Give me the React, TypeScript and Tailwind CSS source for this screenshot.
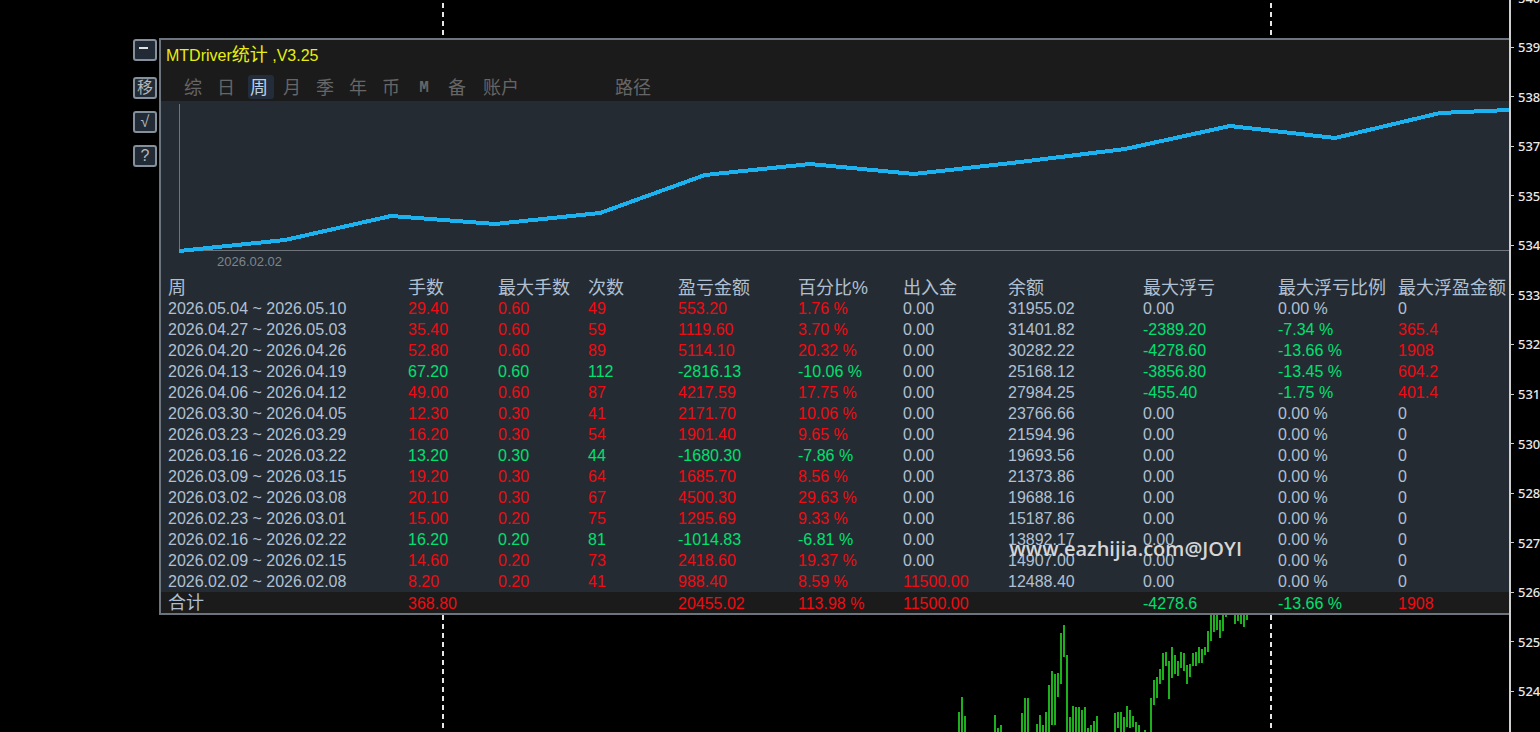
import clsx from "clsx";

type Row = {
  week: string;
  lots: string;
  maxLots: string;
  count: string;
  profit: string;
  percent: string;
  deposit: string;
  balance: string;
  drawdown: string;
  drawdownPct: string;
  floatProfit: string;
};

const TOOLS = [
  { label: "最小化", glyph: "minus" },
  { label: "移动", glyph: "移" },
  { label: "确认", glyph: "√" },
  { label: "帮助", glyph: "?" },
];

const TABS = ["综", "日", "周", "月", "季", "年", "币", "M", "备"];

const HEADERS = [
  "周",
  "手数",
  "最大手数",
  "次数",
  "盈亏金额",
  "百分比%",
  "出入金",
  "余额",
  "最大浮亏",
  "最大浮亏比例",
  "最大浮盈金额",
];

const row = (...v: string[]): Row => ({
  week: v[0],
  lots: v[1],
  maxLots: v[2],
  count: v[3],
  profit: v[4],
  percent: v[5],
  deposit: v[6],
  balance: v[7],
  drawdown: v[8],
  drawdownPct: v[9],
  floatProfit: v[10],
});

const ROWS: Row[] = [
  row("2026.05.04 ~ 2026.05.10", "29.40", "0.60", "49", "553.20", "1.76 %", "0.00", "31955.02", "0.00", "0.00 %", "0"),
  row("2026.04.27 ~ 2026.05.03", "35.40", "0.60", "59", "1119.60", "3.70 %", "0.00", "31401.82", "-2389.20", "-7.34 %", "365.4"),
  row("2026.04.20 ~ 2026.04.26", "52.80", "0.60", "89", "5114.10", "20.32 %", "0.00", "30282.22", "-4278.60", "-13.66 %", "1908"),
  row("2026.04.13 ~ 2026.04.19", "67.20", "0.60", "112", "-2816.13", "-10.06 %", "0.00", "25168.12", "-3856.80", "-13.45 %", "604.2"),
  row("2026.04.06 ~ 2026.04.12", "49.00", "0.60", "87", "4217.59", "17.75 %", "0.00", "27984.25", "-455.40", "-1.75 %", "401.4"),
  row("2026.03.30 ~ 2026.04.05", "12.30", "0.30", "41", "2171.70", "10.06 %", "0.00", "23766.66", "0.00", "0.00 %", "0"),
  row("2026.03.23 ~ 2026.03.29", "16.20", "0.30", "54", "1901.40", "9.65 %", "0.00", "21594.96", "0.00", "0.00 %", "0"),
  row("2026.03.16 ~ 2026.03.22", "13.20", "0.30", "44", "-1680.30", "-7.86 %", "0.00", "19693.56", "0.00", "0.00 %", "0"),
  row("2026.03.09 ~ 2026.03.15", "19.20", "0.30", "64", "1685.70", "8.56 %", "0.00", "21373.86", "0.00", "0.00 %", "0"),
  row("2026.03.02 ~ 2026.03.08", "20.10", "0.30", "67", "4500.30", "29.63 %", "0.00", "19688.16", "0.00", "0.00 %", "0"),
  row("2026.02.23 ~ 2026.03.01", "15.00", "0.20", "75", "1295.69", "9.33 %", "0.00", "15187.86", "0.00", "0.00 %", "0"),
  row("2026.02.16 ~ 2026.02.22", "16.20", "0.20", "81", "-1014.83", "-6.81 %", "0.00", "13892.17", "0.00", "0.00 %", "0"),
  row("2026.02.09 ~ 2026.02.15", "14.60", "0.20", "73", "2418.60", "19.37 %", "0.00", "14907.00", "0.00", "0.00 %", "0"),
  row("2026.02.02 ~ 2026.02.08", "8.20", "0.20", "41", "988.40", "8.59 %", "11500.00", "12488.40", "0.00", "0.00 %", "0"),
];

const PRICES = ["540", "539", "538", "537", "535", "534", "533", "532", "531", "530", "528", "527", "526", "525", "524"];

// balance curve, relative to the plot area
const CURVE: [number, number][] = [
  [18, 150], [124, 139], [230, 115], [334, 123], [439, 112], [544, 74], [649, 63],
  [753, 73], [859, 61], [964, 48], [1069, 25], [1174, 37], [1279, 12], [1348, 9],
];

// price bars: x, high, low
const BARS: [number, number, number][] = [
  [958, 712, 732], [961, 697, 732], [964, 716, 732],
  [994, 715, 732], [997, 728, 732], [1000, 725, 732],
  [1021, 713, 732], [1024, 698, 732], [1027, 698, 732],
  [1036, 724, 732], [1039, 715, 732], [1042, 725, 732], [1045, 712, 732],
  [1048, 685, 732], [1051, 671, 725], [1054, 674, 725], [1057, 673, 697],
  [1060, 633, 684], [1063, 625, 657], [1066, 655, 732], [1069, 717, 732],
  [1072, 706, 732], [1075, 707, 732], [1078, 707, 732], [1081, 710, 732],
  [1084, 707, 732], [1087, 728, 732], [1090, 725, 732], [1093, 721, 732], [1096, 716, 732],
  [1114, 713, 732], [1117, 712, 728], [1120, 712, 732], [1123, 717, 732],
  [1126, 706, 727], [1129, 710, 728], [1132, 716, 727], [1135, 722, 732],
  [1138, 725, 732], [1144, 730, 732], [1150, 698, 732], [1153, 680, 705],
  [1156, 677, 698], [1159, 669, 684], [1162, 653, 680], [1165, 652, 666],
  [1168, 661, 699], [1171, 647, 678], [1174, 655, 674], [1177, 661, 676],
  [1180, 652, 668], [1183, 653, 671], [1186, 665, 684], [1189, 664, 677],
  [1192, 653, 666], [1195, 652, 666], [1198, 647, 663], [1201, 649, 663],
  [1204, 647, 655], [1207, 631, 652], [1210, 612, 641], [1213, 612, 632],
  [1216, 612, 630], [1219, 620, 638], [1222, 612, 631], [1225, 612, 617],
  [1231, 612, 615], [1234, 612, 624], [1237, 612, 621], [1240, 612, 624],
  [1243, 612, 627], [1246, 612, 620],
];

function tone(value: string) {
  if (value.startsWith("-")) return "text-[#00e070]";
  return parseFloat(value) === 0 ? "text-[#b0c0d2]" : "text-[#ee0c12]";
}

function PriceBackdrop() {
  return (
    <svg className="absolute inset-0 h-full w-full" shapeRendering="crispEdges" aria-hidden="true">
      {[443, 1271].map((x) => (
        <line key={x} x1={x} x2={x} y1="3" y2="100%" stroke="#e6e6e6" strokeWidth="2" strokeDasharray="5 4" />
      ))}
      {BARS.map(([x, high, low]) => (
        <rect key={x} x={x} y={high} width="2" height={low - high} fill="#1cb01c" />
      ))}
    </svg>
  );
}

function PriceAxis() {
  return (
    <aside className="flex w-[31px] shrink-0 flex-col overflow-hidden border-l-2 border-[#cfcfcf]">
      <ul className="-mt-[27px] flex flex-1 flex-col pb-4">
        {PRICES.map((p) => (
          <li key={p} className="flex flex-1 items-center gap-1 text-[13px] leading-4 font-medium text-[#e8e8e8]">
            <span className="h-px w-[3px] shrink-0 bg-[#cfcfcf]" />
            <span className="font-['Noto_Sans',sans-serif]">{p}</span>
          </li>
        ))}
      </ul>
    </aside>
  );
}

function BalanceChart() {
  return (
    <figure className="h-[175px]">
      <svg
        className="block h-[150px] w-full overflow-visible"
        viewBox="0 0 1348 150"
        preserveAspectRatio="none"
        shapeRendering="crispEdges"
        role="img"
        aria-label="余额曲线"
      >
        <path d="M18.5 3V149.5H1348" fill="none" stroke="#6f757b" strokeWidth="1" />
        <polyline
          points={CURVE.map((p) => p.join(",")).join(" ")}
          fill="none"
          stroke="#1cb2f0"
          strokeWidth="4"
        />
      </svg>
      <figcaption className="pt-[2px] pl-14 text-[13px] leading-[18px] text-[#7e858c]">2026.02.02</figcaption>
    </figure>
  );
}

function StatsTable() {
  return (
    <table className="w-full table-fixed border-collapse text-left text-base leading-[21px] whitespace-nowrap">
      <colgroup>
        <col className="w-[247px]" />
        <col className="w-[90px]" />
        <col className="w-[90px]" />
        <col className="w-[90px]" />
        <col className="w-[120px]" />
        <col className="w-[105px]" />
        <col className="w-[105px]" />
        <col className="w-[135px]" />
        <col className="w-[135px]" />
        <col className="w-[120px]" />
        <col />
      </colgroup>
      <thead>
        <tr className="h-[22px] text-lg leading-[20px] text-[#b0c0d2]">
          {HEADERS.map((h) => (
            <th key={h} scope="col" className="p-0 pt-[2px] font-normal first:pl-[7px]">
              {h}
            </th>
          ))}
        </tr>
      </thead>
      <tbody>
        {ROWS.map((r) => {
          const result = tone(r.profit);
          return (
            <tr key={r.week} className="h-[21px] text-[#b0c0d2]">
              <td className="p-0 pl-[7px]">{r.week}</td>
              <td className={clsx("p-0", result)}>{r.lots}</td>
              <td className={clsx("p-0", result)}>{r.maxLots}</td>
              <td className={clsx("p-0", result)}>{r.count}</td>
              <td className={clsx("p-0", result)}>{r.profit}</td>
              <td className={clsx("p-0", result)}>{r.percent}</td>
              <td className={clsx("p-0", tone(r.deposit))}>{r.deposit}</td>
              <td className="p-0">{r.balance}</td>
              <td className={clsx("p-0", tone(r.drawdown))}>{r.drawdown}</td>
              <td className={clsx("p-0", tone(r.drawdownPct))}>{r.drawdownPct}</td>
              <td className={clsx("p-0", tone(r.floatProfit))}>{r.floatProfit}</td>
            </tr>
          );
        })}
      </tbody>
      <tfoot>
        <tr className="h-[21px] bg-[#1b1b1b] leading-[19px] text-[#ee0c12]">
          <th scope="row" className="p-0 pt-[2px] pl-[7px] text-lg leading-[19px] font-normal text-[#b0c0d2]">
            合计
          </th>
          <td className="p-0 pt-[2px]">368.80</td>
          <td className="p-0" />
          <td className="p-0" />
          <td className="p-0 pt-[2px]">20455.02</td>
          <td className="p-0 pt-[2px]">113.98 %</td>
          <td className="p-0 pt-[2px]">11500.00</td>
          <td className="p-0" />
          <td className="p-0 pt-[2px] text-[#00e070]">-4278.6</td>
          <td className="p-0 pt-[2px] text-[#00e070]">-13.66 %</td>
          <td className="p-0 pt-[2px]">1908</td>
        </tr>
      </tfoot>
    </table>
  );
}

export default function App() {
  return (
    <div className="flex min-h-screen overflow-hidden bg-black font-['Liberation_Sans','Noto_Sans_CJK_SC',sans-serif]">
      <main className="relative flex min-w-0 flex-1 items-start gap-[2px] pt-[38px] pl-[133px]">
        <PriceBackdrop />

        <div className="relative flex w-6 shrink-0 flex-col gap-3 pt-px">
          {TOOLS.map(({ label, glyph }) => (
            <button
              key={label}
              type="button"
              aria-label={label}
              className="flex h-[22px] w-6 items-center justify-center rounded-[3px] border-2 border-[#84909c] bg-[#222b35] text-base leading-none text-[#b4b8ba] first:mb-1"
            >
              {glyph === "minus" ? <span className="mr-1 mb-1 h-[2px] w-[9px] bg-[#dfe3e6]" /> : glyph}
            </button>
          ))}
        </div>

        <section className="relative min-w-0 flex-1 border-y-2 border-l-2 border-[#6c757e] bg-[#252b33]">
          <header className="bg-[#1b1b1b] pb-[2px]">
            <h1 className="h-[35px] pl-[5px] text-base leading-[32px] text-[#e8ee10]">
              MTDriver<span className="text-lg leading-none">统计</span> ,V3.25
            </h1>
            <nav className="flex gap-[7px] pl-[21px] text-lg leading-6 text-[#666]">
              {TABS.map((t) => (
                <button
                  key={t}
                  type="button"
                  className={clsx(
                    "h-6 w-[26px] pt-px pr-1",
                    t === "周" && "rounded-[3px] bg-[#222c3a] text-[#bdd0e4]",
                    t === "M" && "font-['Liberation_Mono',monospace] text-base font-bold",
                  )}
                >
                  {t}
                </button>
              ))}
              <button type="button" className="h-6 w-[125px] pt-px pl-1 text-left">
                账户
              </button>
              <button type="button" className="h-6 pt-px pl-1">
                路径
              </button>
            </nav>
          </header>

          <BalanceChart />
          <StatsTable />

          <p className="absolute right-[267px] bottom-[50px] font-['Open_Sans',sans-serif] text-xl leading-7 font-semibold text-[#d6d6d6] [font-kerning:none]">
            www.eazhijia.com@JOYI
          </p>
        </section>
      </main>

      <PriceAxis />
    </div>
  );
}
